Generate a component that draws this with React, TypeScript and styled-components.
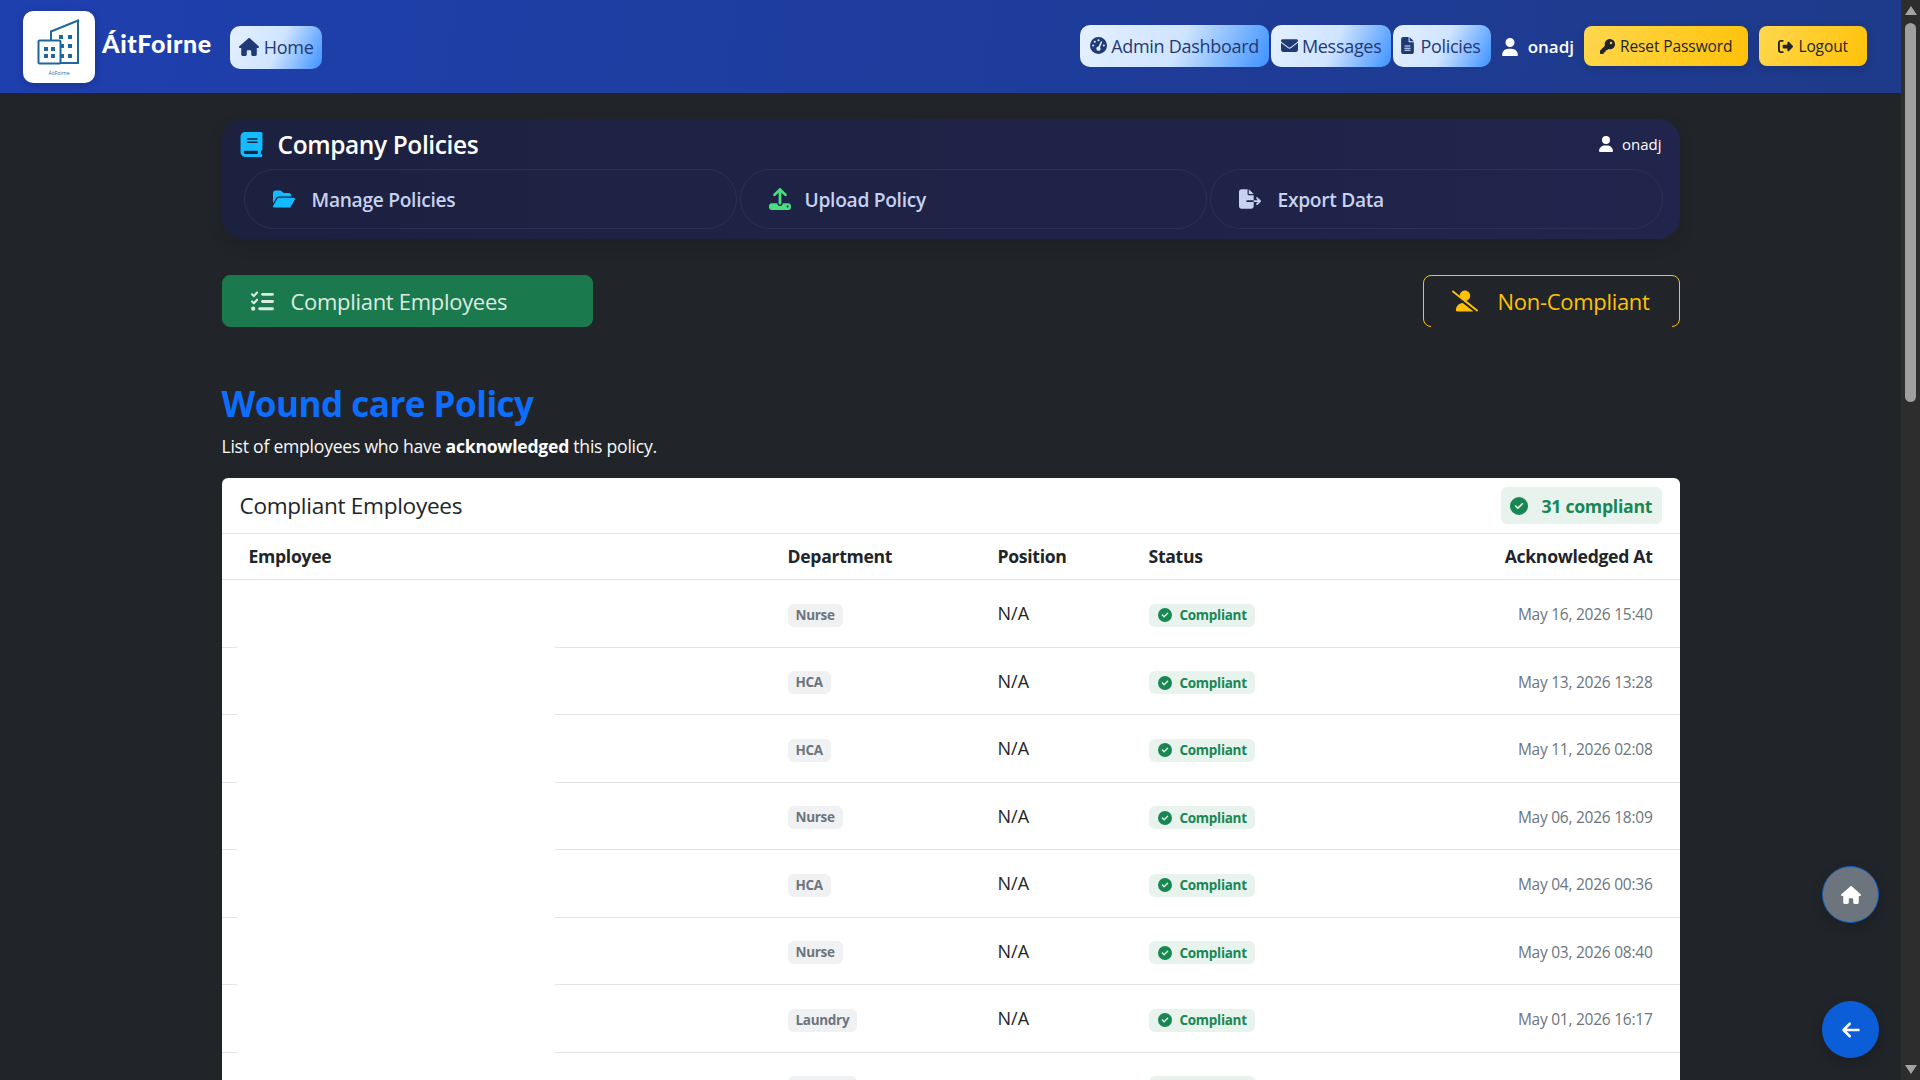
import React from 'react';
import styled, { createGlobalStyle } from 'styled-components';
import {
  FaArrowLeft,
  FaBook,
  FaCircleCheck,
  FaEnvelope,
  FaFileExport,
  FaFileLines,
  FaFolderOpen,
  FaGaugeHigh,
  FaHouse,
  FaKey,
  FaListCheck,
  FaRightFromBracket,
  FaUpload,
  FaUser,
  FaUserSlash,
} from 'react-icons/fa6';

const GlobalStyle = createGlobalStyle`
  html, body {
    margin: 0;
    height: 100%;
    overflow: hidden;
    background: #212529;
    font-family: "Open Sans", "Noto Sans", sans-serif;
  }
  * { box-sizing: border-box; }
`;

const Shell = styled.div`
  display: flex;
  height: 100vh;
  overflow: hidden;
`;

const Page = styled.div`
  flex: 1;
  min-width: 0;
  overflow: hidden;
  background: #212529;
`;

const ScrollRail = styled.div`
  width: 19px;
  flex: none;
  display: flex;
  flex-direction: column;
  align-items: center;
  padding: 6px 0;
  background: #2d2d2d;
`;

const RailArrow = styled.div<{ $down?: boolean }>`
  width: 0;
  height: 0;
  border-left: 6.5px solid transparent;
  border-right: 6.5px solid transparent;
  ${(p) => (p.$down ? 'border-top: 9px solid #a3a3a3; margin-top: auto;' : 'border-bottom: 9px solid #a3a3a3;')}
`;

const RailThumb = styled.div`
  width: 11px;
  height: 379px;
  margin-top: 8px;
  border-radius: 6px;
  background: #9f9f9f;
`;

const Navbar = styled.nav`
  height: 93px;
  display: flex;
  align-items: center;
  padding: 0 34px 0 23px;
  background: linear-gradient(100deg, #1e40af, #1e3a8a);
`;

const LogoBox = styled.div`
  width: 72px;
  height: 72px;
  flex: none;
  border-radius: 10px;
  background: #fff;
  box-shadow: 0 2px 8px rgba(0, 0, 0, 0.2);
`;

const Brand = styled.span`
  margin: -8px 0 0 7px;
  color: #fff;
  font-family: "Lato", sans-serif;
  font-size: 25px;
  font-weight: 900;
  letter-spacing: 0.6px;
`;

const NavLink = styled.a<{ $home?: boolean; $tight?: boolean }>`
  display: flex;
  align-items: center;
  gap: ${(p) => (p.$home ? '5px' : '4px')};
  height: ${(p) => (p.$home ? '43px' : '42px')};
  padding: ${(p) => (p.$home ? '0 8px 0 9px' : p.$tight ? '0 10px 0 6px' : '0 10px')};
  margin-left: ${(p) => (p.$home ? '18px' : '0')};
  margin-top: ${(p) => (p.$home ? '1px' : '-2px')};
  border-radius: 10px;
  color: #1f3a75;
  font-size: 18px;
  letter-spacing: -0.3px;
  white-space: nowrap;
  background: linear-gradient(115deg, #e4f0ff 0%, #cfe4ff 52%, #3d92ff 100%);

  svg { font-size: ${(p) => (p.$home ? '20px' : '17px')}; flex: none; }
`;

const NavRight = styled.div`
  margin-left: auto;
  display: flex;
  align-items: center;
  gap: 2px;
`;

const NavUser = styled.span`
  display: flex;
  align-items: center;
  gap: 9px;
  margin: 0 8px 0 8px;
  color: #fff;
  font-size: 17px;
  font-weight: 600;
  svg { font-size: 18px; }
`;

const ActionButton = styled.a<{ $gap?: number; $pad: number }>`
  display: flex;
  align-items: center;
  gap: 5px;
  height: 40px;
  margin-top: -1px;
  margin-right: ${(p) => p.$gap ?? 0}px;
  padding: 0 ${(p) => p.$pad}px;
  border-radius: 8px;
  color: #212529;
  font-size: 15.5px;
  font-weight: 500;
  letter-spacing: -0.1px;
  background: linear-gradient(120deg, #ffd84f, #ffc107);
  box-shadow: 0 3px 8px rgba(0, 0, 0, 0.15);
  svg { font-size: 15px; }
`;

const Container = styled.main`
  width: 1458px;
  margin: 0 auto;
`;

const PolicyPanel = styled.section`
  margin-top: 26px;
  padding: 0 18px 10px 17px;
  border-radius: 22px;
  background: linear-gradient(90deg, #1d2140, #21244c);
  box-shadow: 0 6px 16px rgba(0, 0, 0, 0.12);
`;

const PanelTop = styled.div`
  height: 50px;
  display: flex;
  align-items: center;
`;

const PanelTitle = styled.h1`
  display: flex;
  align-items: center;
  gap: 14px;
  margin: 0;
  color: #fff;
  font-size: 24.5px;
  font-weight: 600;
  letter-spacing: -0.4px;
  svg { font-size: 25px; color: #12bcff; }
`;

const PanelUser = styled.span`
  display: flex;
  align-items: center;
  gap: 8px;
  margin-left: auto;
  color: #fff;
  font-size: 15px;
  svg { font-size: 16px; }
`;

const PillRow = styled.div`
  display: grid;
  grid-template-columns: 493px 467px 1fr;
  gap: 3px;
  margin: 0 -1px 0 5px;
`;

const Pill = styled.a<{ $tint: string; $gap?: number }>`
  height: 60px;
  display: flex;
  align-items: center;
  gap: ${(p) => p.$gap ?? 17}px;
  padding-left: 28px;
  border: 1px solid #2a3153;
  border-radius: 30px;
  color: #c7d2f0;
  font-size: 19.2px;
  font-weight: 600;
  letter-spacing: -0.3px;
  svg { font-size: 22px; color: ${(p) => p.$tint}; }
`;

const ToggleRow = styled.div`
  display: flex;
  justify-content: space-between;
  margin-top: 36px;
`;

const ToggleButton = styled.a<{ $active?: boolean }>`
  position: relative;
  height: 52px;
  display: flex;
  align-items: center;
  gap: ${(p) => (p.$active ? '17px' : '20px')};
  width: ${(p) => (p.$active ? '371px' : '257px')};
  padding-left: 28px;
  border-radius: 8px;
  border: 1px solid ${(p) => (p.$active ? '#1b7a4d' : '#ffc107')};
  color: ${(p) => (p.$active ? '#dcebe2' : '#ffc107')};
  background: ${(p) => (p.$active ? '#1b7a4d' : 'transparent')};
  font-size: 22px;
  letter-spacing: -0.3px;
  svg { font-size: ${(p) => (p.$active ? '23px' : '26px')}; flex: none; }

  /* the outline's bottom edge is hidden between the corners */
  ${(p) => !p.$active && `
    &::after {
      content: '';
      position: absolute;
      left: 7px;
      right: 7px;
      bottom: -1px;
      height: 1px;
      background: #212529;
    }
  `}
`;

const PolicyHeading = styled.h2`
  margin: 53px 0 0;
  color: #0d6efd;
  font-size: 35px;
  line-height: 48px;
  font-weight: 700;
  letter-spacing: -0.5px;
`;

const Lead = styled.p`
  margin: 4px 0 0;
  color: #f8f9fa;
  font-size: 17.6px;
  line-height: 28px;
  letter-spacing: -0.25px;
  strong { font-weight: 700; color: #fff; }
`;

const Card = styled.section`
  margin-top: 18px;
  border-radius: 6px 6px 0 0;
  background: #fff;
`;

const CardHeader = styled.header`
  height: 56px;
  display: flex;
  align-items: center;
  justify-content: space-between;
  padding: 0 18px;
  border-bottom: 1px solid #e1e3e6;
`;

const CardTitle = styled.h3`
  margin: 0;
  color: #212529;
  font-size: 22.6px;
  font-weight: 500;
  letter-spacing: -0.3px;
`;

const CountBadge = styled.span`
  height: 37px;
  width: 161px;
  display: flex;
  align-items: center;
  gap: 14px;
  padding-left: 9px;
  border-radius: 6px;
  color: #198754;
  background: #e8f3ee;
  font-size: 17.7px;
  font-weight: 700;
  letter-spacing: -0.3px;
  svg { font-size: 18px; }
`;

const gridColumns = '539px 210px 151px 1fr 1fr';

const HeadRow = styled.div`
  height: 46px;
  display: grid;
  grid-template-columns: ${gridColumns};
  align-items: center;
  padding: 0 27px 2px;
  border-bottom: 1px solid #e1e3e6;
  color: #212529;
  font-size: 17.6px;
  font-weight: 700;
  letter-spacing: -0.3px;
`;

const BodyRow = styled.div`
  position: relative;
  height: 67.5px;
  display: grid;
  grid-template-columns: ${gridColumns};
  align-items: center;
  padding: 0 27px;
  border-bottom: 1px solid #e1e3e6;

  &::after {
    content: '';
    position: absolute;
    left: 15px;
    bottom: -1px;
    width: 318px;
    height: 1px;
    background: #fff;
  }
`;

const RightCell = styled.div`
  text-align: right;
`;

const TagCell = styled.div`
  display: flex;
  margin-top: 4px;
`;

const DateCell = styled(RightCell)`
  margin-top: 2px;
`;

const DeptTag = styled.span`
  height: 23px;
  padding: 0 8px;
  border-radius: 6px;
  color: #6c757d;
  background: #f0f1f3;
  font-size: 13.5px;
  line-height: 23px;
  font-weight: 700;
  letter-spacing: -0.3px;
`;

const PositionText = styled.span`
  color: #212529;
  font-size: 18px;
`;

const StatusTag = styled.span`
  display: inline-flex;
  align-items: center;
  gap: 8px;
  height: 23px;
  padding: 0 8px 0 9px;
  border-radius: 6px;
  color: #198754;
  background: #e8f3ee;
  font-size: 13.5px;
  font-weight: 700;
  letter-spacing: -0.3px;
  svg { font-size: 14px; }
`;

const DateText = styled.span`
  color: #6c757d;
  font-size: 15.5px;
  letter-spacing: -0.25px;
`;

const FloatButton = styled.a<{ $bottom: number; $bg: string }>`
  position: fixed;
  right: 41px;
  bottom: ${(p) => p.$bottom}px;
  width: 57px;
  height: 57px;
  display: flex;
  align-items: center;
  justify-content: center;
  border-radius: 50%;
  color: #fff;
  background: ${(p) => p.$bg};
  font-size: 20px;
  box-shadow: 0 4px 12px rgba(0, 0, 0, 0.2);
`;

const HomeFloat = styled(FloatButton)`
  border: 1px solid #0d5fcc;
`;

const rows = [
  { dept: 'Nurse', date: 'May 16, 2026 15:40' },
  { dept: 'HCA', date: 'May 13, 2026 13:28' },
  { dept: 'HCA', date: 'May 11, 2026 02:08' },
  { dept: 'Nurse', date: 'May 06, 2026 18:09' },
  { dept: 'HCA', date: 'May 04, 2026 00:36' },
  { dept: 'Nurse', date: 'May 03, 2026 08:40' },
  { dept: 'Laundry', date: 'May 01, 2026 16:17' },
];

function BuildingLogo() {
  const ink = '#1f689f';
  return (
    <svg width="72" height="72" viewBox="0 0 72 72">
      <path d="M28 29V20.5L55 9.5V52H37" fill="none" stroke={ink} strokeWidth="2" />
      <rect x="15.5" y="29.5" width="22" height="23" rx="1" fill="#fff" stroke={ink} strokeWidth="2" />
      {[
        [36, 24], [45, 24], [37, 33], [45, 33], [37, 43], [45, 43],
        [21, 36], [28, 36], [21, 43], [28, 43],
      ].map(([x, y]) => (
        <rect key={`${x}-${y}`} x={x} y={y} width="4" height="4" fill={ink} />
      ))}
      <text x="36" y="64" textAnchor="middle" fontSize="5" fill={ink} fontFamily="Open Sans, sans-serif">ÁitFoirne</text>
    </svg>
  );
}

export default function App() {
  return (
    <>
      <GlobalStyle />
      <Shell>
        <Page>
          <Navbar>
            <LogoBox><BuildingLogo /></LogoBox>
            <Brand>ÁitFoirne</Brand>
            <NavLink $home><FaHouse />Home</NavLink>
            <NavRight>
              <NavLink><FaGaugeHigh />Admin Dashboard</NavLink>
              <NavLink><FaEnvelope />Messages</NavLink>
              <NavLink $tight><FaFileLines />Policies</NavLink>
              <NavUser><FaUser />onadj</NavUser>
              <ActionButton $gap={9} $pad={16}><FaKey />Reset Password</ActionButton>
              <ActionButton $pad={19}><FaRightFromBracket />Logout</ActionButton>
            </NavRight>
          </Navbar>

          <Container>
            <PolicyPanel>
              <PanelTop>
                <PanelTitle><FaBook />Company Policies</PanelTitle>
                <PanelUser><FaUser />onadj</PanelUser>
              </PanelTop>
              <PillRow>
                <Pill $tint="#12bcff"><FaFolderOpen />Manage Policies</Pill>
                <Pill $tint="#4ade80" $gap={14}><FaUpload />Upload Policy</Pill>
                <Pill $tint="#c7d2f0"><FaFileExport />Export Data</Pill>
              </PillRow>
            </PolicyPanel>

            <ToggleRow>
              <ToggleButton $active><FaListCheck />Compliant Employees</ToggleButton>
              <ToggleButton><FaUserSlash />Non-Compliant</ToggleButton>
            </ToggleRow>

            <PolicyHeading>Wound care Policy</PolicyHeading>
            <Lead>List of employees who have <strong>acknowledged</strong> this policy.</Lead>

            <Card>
              <CardHeader>
                <CardTitle>Compliant Employees</CardTitle>
                <CountBadge><FaCircleCheck />31 compliant</CountBadge>
              </CardHeader>
              <HeadRow>
                <div>Employee</div>
                <div>Department</div>
                <div>Position</div>
                <div>Status</div>
                <RightCell>Acknowledged At</RightCell>
              </HeadRow>
              {rows.map((row) => (
                <BodyRow key={row.date}>
                  <div />
                  <TagCell><DeptTag>{row.dept}</DeptTag></TagCell>
                  <PositionText>N/A</PositionText>
                  <TagCell><StatusTag><FaCircleCheck />Compliant</StatusTag></TagCell>
                  <DateCell><DateText>{row.date}</DateText></DateCell>
                </BodyRow>
              ))}
              <BodyRow>
                <div />
                <TagCell><DeptTag>Laundry</DeptTag></TagCell>
                <div />
                <TagCell><StatusTag><FaCircleCheck />Compliant</StatusTag></TagCell>
                <div />
              </BodyRow>
            </Card>
          </Container>

          <HomeFloat $bottom={157} $bg="#6c757d"><FaHouse /></HomeFloat>
          <FloatButton $bottom={22} $bg="#0b5ed7"><FaArrowLeft /></FloatButton>
        </Page>
        <ScrollRail>
          <RailArrow />
          <RailThumb />
          <RailArrow $down />
        </ScrollRail>
      </Shell>
    </>
  );
}
